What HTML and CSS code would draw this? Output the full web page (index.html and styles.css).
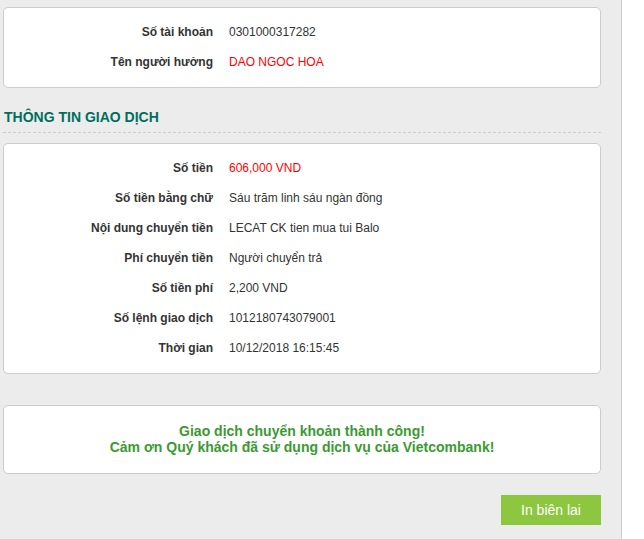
FILE: index.html
```html
<!DOCTYPE html>
<html lang="vi">
<head>
    <meta charset="UTF-8">
    <meta name="viewport" content="width=device-width, initial-scale=1.0">
    <title>Chuyển khoản thành công</title>
    <link rel="stylesheet" href="styles.css">
</head>
<body>
    <div class="page">
        <div class="card info">
            <div class="label">Số tài khoản</div>
            <div class="value">0301000317282</div>
            <div class="label">Tên người hưởng</div>
            <div class="value red">DAO NGOC HOA</div>
        </div>

        <h3 class="section-title">THÔNG TIN GIAO DỊCH</h3>

        <div class="card info">
            <div class="label">Số tiền</div>
            <div class="value red">606,000 VND</div>
            <div class="label">Số tiền bằng chữ</div>
            <div class="value">Sáu trăm linh sáu ngàn đồng</div>
            <div class="label">Nội dung chuyển tiền</div>
            <div class="value">LECAT CK tien mua tui Balo</div>
            <div class="label">Phí chuyển tiền</div>
            <div class="value">Người chuyển trả</div>
            <div class="label">Số tiền phí</div>
            <div class="value">2,200 VND</div>
            <div class="label">Số lệnh giao dịch</div>
            <div class="value">1012180743079001</div>
            <div class="label">Thời gian</div>
            <div class="value">10/12/2018 16:15:45</div>
        </div>

        <div class="card success">
            Giao dịch chuyển khoản thành công!<br>
            Cảm ơn Quý khách đã sử dụng dịch vụ của Vietcombank!
        </div>

        <div class="actions">
            <button class="btn-print">In biên lai</button>
        </div>
    </div>
</body>
</html>
```

FILE: styles.css
```css
body {
    margin: 0;
    background-color: white;
    font-family: "Liberation Sans", Arial, sans-serif;
    font-size: 12px;
    color: #333;
}
.page {
    width: 598px;
    min-height: 100vh;
    padding: 7px 20px 0 3px;
    background-color: #ececec;
    border-right: 1px solid #cfcfcf;
    box-sizing: content-box;
}
.card {
    background-color: white;
    border: 1px solid #cccccc;
    border-radius: 5px;
}
.info {
    display: grid;
    grid-template-columns: 209px 1fr;
    column-gap: 16px;
    padding: 9px 0 10px 0;
}
.label {
    text-align: right;
    font-weight: bold;
    line-height: 30px;
}
.value {
    line-height: 30px;
}
.red {
    color: #ff0000;
}
.section-title {
    margin: 18px 0 10px 0;
    padding: 1px 0 5px 1px;
    font-size: 14px;
    line-height: 20px;
    color: #006e5c;
    border-bottom: 1px dashed #cccccc;
}
.success {
    margin-top: 31px;
    padding: 17px 0 18px 0;
    text-align: center;
    font-size: 14px;
    font-weight: bold;
    line-height: 16px;
    color: #3a9a31;
}
.actions {
    display: flex;
    justify-content: flex-end;
    margin-top: 21px;
}
.btn-print {
    width: 100px;
    height: 30px;
    border: none;
    background-color: #8dc63f;
    color: white;
    font-family: "Liberation Sans", Arial, sans-serif;
    font-size: 14px;
    cursor: pointer;
}
```
